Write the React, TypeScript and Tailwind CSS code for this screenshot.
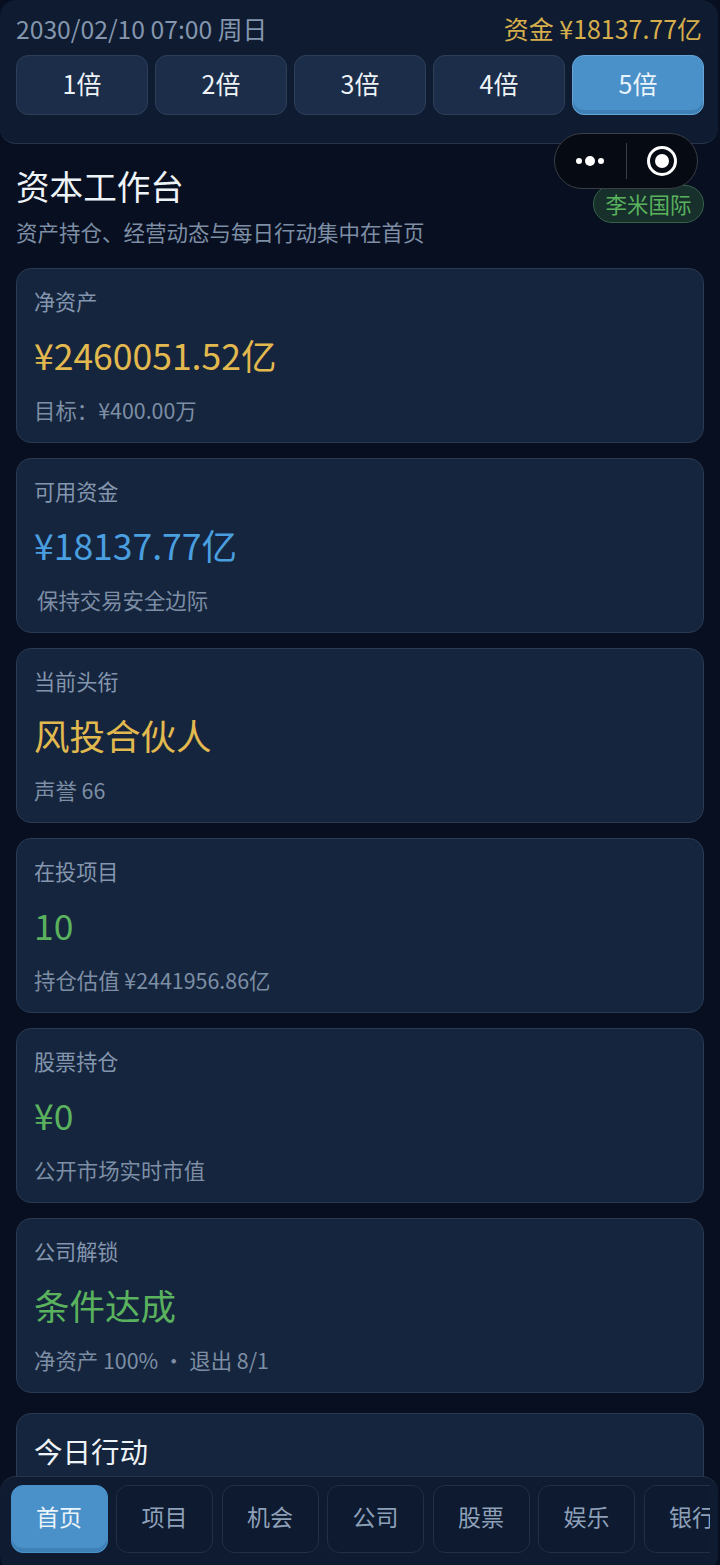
const cards = [
  { label: "净资产", value: "¥2460051.52亿", sub: "目标：¥400.00万", color: "text-[#e2b94e]" },
  { label: "可用资金", value: "¥18137.77亿", sub: "保持交易安全边际", color: "text-[#4a9fe0]", indent: true },
  { label: "当前头衔", value: "风投合伙人", sub: "声誉 66", color: "text-[#e2b94e]" },
  { label: "在投项目", value: "10", sub: "持仓估值 ¥2441956.86亿", color: "text-[#5ab25e]" },
  { label: "股票持仓", value: "¥0", sub: "公开市场实时市值", color: "text-[#5ab25e]" },
  { label: "公司解锁", value: "条件达成", sub: "净资产 100% ・ 退出 8/1", color: "text-[#5ab25e]" },
];

const speeds = ["1倍", "2倍", "3倍", "4倍", "5倍"];
const tabs = ["首页", "项目", "机会", "公司", "股票", "娱乐", "银行"];

const App = () => {
  return (
    <div className="relative h-[1565px] w-[720px] overflow-hidden bg-[#070f20] font-['Noto_Sans_CJK_SC',sans-serif]">
      {/* top bar */}
      <div className="mr-[2px] h-[144px] rounded-[16px] border-b border-[#25344a] bg-[#0e1b30] px-[16px] pt-[9px]">
        <div className="flex h-[38px] items-center justify-between">
          <span className="text-[24.7px] leading-[38px] text-[#8496ae]">2030/02/10 07:00 周日</span>
          <span className="text-[24.96px] leading-[38px] text-[#d6ae4c]">资金 ¥18137.77亿</span>
        </div>
        <div className="mt-[8px] mr-[-2px] flex gap-[7px]">
          {speeds.map((s, i) => (
            <div
              key={s}
              className={
                i === 4
                  ? "flex h-[60px] w-[132px] items-center justify-center rounded-[12px] border border-[#66a3d6] bg-[#4a90c9] pb-[2px] text-[24.96px] text-[#eaf4fb] shadow-[inset_0_-4px_0_#3f80b7]"
                  : "flex h-[60px] w-[132px] items-center justify-center rounded-[12px] border border-[#2d3f58] bg-[#1b2d48] pb-[2px] text-[24.96px] text-[#eef3f8]"
              }
            >
              {s}
            </div>
          ))}
        </div>
      </div>

      {/* title */}
      <div className="flex items-start justify-between px-[16px] pt-[19px]">
        <div>
          <h1 className="text-[33.6px] leading-[46px] font-normal text-[#eef3f8]">资本工作台</h1>
          <p className="mt-[8px] text-[21.5px] leading-[30px] text-[#7d8ea5]">资产持仓、经营动态与每日行动集中在首页</p>
        </div>
        <span className="mt-[22px] flex h-[38px] w-[111px] items-center justify-center rounded-full border border-[#35634a] bg-[#17302c] text-[21.5px] text-[#5ab25e]">
          李米国际
        </span>
      </div>

      {/* stat cards */}
      <div className="mt-[21px] flex flex-col gap-[15px] px-[16px]">
        {cards.map((c) => (
          <div key={c.label} className="h-[175px] rounded-[15px] border border-[#2a3a52] bg-[#15253d] px-[17px] pt-[17px]">
            <div className="text-[21.12px] leading-[30px] text-[#8496ae]">{c.label}</div>
            <div className={`mt-[14px] text-[35.5px] leading-[50px] ${c.color}`}>{c.value}</div>
            <div className={`mt-[15px] text-[21.4px] leading-[30px] text-[#7d8ea5] ${c.indent ? "pl-[3px]" : ""}`}>{c.sub}</div>
          </div>
        ))}
        <div className="mt-[5px] h-[175px] rounded-[15px] border border-[#2a3a52] bg-[#15253d] px-[17px] pt-[15px]">
          <div className="text-[28.5px] leading-[44px] text-[#eef3f8]">今日行动</div>
        </div>
      </div>

      {/* capsule */}
      <div className="absolute top-[133px] left-[554px] flex h-[56px] w-[144px] items-center rounded-full border border-[#3a3e45] bg-[#060a13]">
        <div className="flex flex-1 items-center justify-center gap-[3px]">
          <span className="h-[6px] w-[6px] rounded-full bg-white" />
          <span className="h-[10px] w-[10px] rounded-full bg-white" />
          <span className="h-[6px] w-[6px] rounded-full bg-white" />
        </div>
        <div className="h-[36px] w-px bg-[#3a3e45]" />
        <div className="flex flex-1 items-center justify-center">
          <div className="flex h-[30px] w-[30px] items-center justify-center rounded-full border-[3px] border-white">
            <span className="h-[14px] w-[14px] rounded-full bg-white" />
          </div>
        </div>
      </div>

      {/* bottom tabs */}
      <div className="absolute top-[1476px] left-0 h-[96px] w-[718px] overflow-hidden rounded-[16px] border-t border-[#25344a] bg-[#0e1b30] pt-[8px] pl-[10.5px]">
        <div className="flex w-[699px] gap-[8.5px] overflow-hidden">
          {tabs.map((t, i) => (
            <div
              key={t}
              className={
                i === 0
                  ? "flex h-[68px] w-[97px] shrink-0 items-center justify-center rounded-[12px] border border-[#4a90c9] bg-[#4a90c9] pb-[5px] text-[23px] text-[#eaf4fb] shadow-[inset_0_-4px_0_#3f80b7]"
                  : "flex h-[68px] w-[97px] shrink-0 items-center justify-center rounded-[12px] border border-[#203048] bg-[#0d1a30] pb-[5px] text-[23px] text-[#8ea0b8]"
              }
            >
              {t}
            </div>
          ))}
        </div>
      </div>
    </div>
  );
};

export default App;
